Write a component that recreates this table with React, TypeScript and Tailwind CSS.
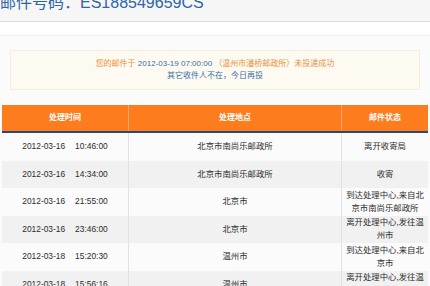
import React from "react"

const rows = [
  { date: "2012-03-16", time: "10:46:00", place: "北京市南尚乐邮政所", status: ["离开收寄局"] },
  { date: "2012-03-16", time: "14:34:00", place: "北京市南尚乐邮政所", status: ["收寄"] },
  { date: "2012-03-16", time: "21:55:00", place: "北京市", status: ["到达处理中心,来自北", "京市南尚乐邮政所"] },
  { date: "2012-03-16", time: "23:46:00", place: "北京市", status: ["离开处理中心,发往温", "州市"] },
  { date: "2012-03-18", time: "15:20:30", place: "温州市", status: ["到达处理中心,来自北", "京市"] },
  { date: "2012-03-18", time: "15:56:16", place: "温州市", status: ["离开处理中心,发往温", "州市"] },
]

export default function App() {
  return (
    <div className="w-[430px] h-[286px] overflow-hidden bg-white text-[#2b2b2b] [font-family:'Liberation_Sans','Noto_Sans_CJK_SC',sans-serif]">
      {/* title strip */}
      <div className="h-[22px] bg-[#f6f6f6] border-b border-[#dcdcdc] overflow-hidden">
        <h1 className="-mt-[8px] text-[16px] leading-[22px] text-[#2f66a3] whitespace-nowrap">
          邮件号码：ES188549659CS
        </h1>
      </div>
      <div className="h-[13px] bg-white" />

      <div className="bg-[#fbfbfb] border-t border-[#f0f0f0] pt-[14px] h-[252px]">
        {/* notice */}
        <div className="mx-[10px] h-[40px] border border-[#f6eed8] bg-[#fdfaf1] flex flex-col items-center justify-center text-[8px] leading-[12px]">
          <p className="whitespace-nowrap">
            <span className="text-[#e9913b]">您的邮件于</span>
            <span className="text-[#3a6ea6]"> 2012-03-19 07:00:00 </span>
            <span className="text-[#e9913b]">（温州市潘桥邮政所）未投递成功</span>
          </p>
          <p className="text-[#3a6ea6] whitespace-nowrap">其它收件人不在，今日再投</p>
        </div>

        {/* table */}
        <div className="mt-[15px] mx-[2px] w-[426px]">
          <div className="grid grid-cols-[127px_213px_86px] h-[28px] bg-[#fd7c1e] text-white font-bold text-[8px] border-b-2 border-[#2d4a6e]">
            <div className="flex items-center justify-center border-r border-[#fca468]">处理时间</div>
            <div className="flex items-center justify-center border-r border-[#fca468]">处理地点</div>
            <div className="flex items-center justify-center">邮件状态</div>
          </div>
          {rows.map((r, i) => (
            <div
              key={i}
              className={`grid grid-cols-[127px_213px_86px] h-[27.5px] text-[8.4px] leading-[13px] ${i % 2 === 0 ? "bg-[#fbfbfb]" : "bg-[#f1f1f1]"}`}
            >
              <div className="flex items-center justify-center border-r border-[#e2e2e2] whitespace-nowrap">
                <span>{r.date}</span>
                <span className="ml-[10px]">{r.time}</span>
              </div>
              <div className="flex items-center justify-center border-r border-[#e2e2e2]">{r.place}</div>
              <div className="flex flex-col items-center justify-center whitespace-nowrap">
                {r.status.map((s, j) => (
                  <span key={j}>{s}</span>
                ))}
              </div>
            </div>
          ))}
        </div>
      </div>
    </div>
  )
}
